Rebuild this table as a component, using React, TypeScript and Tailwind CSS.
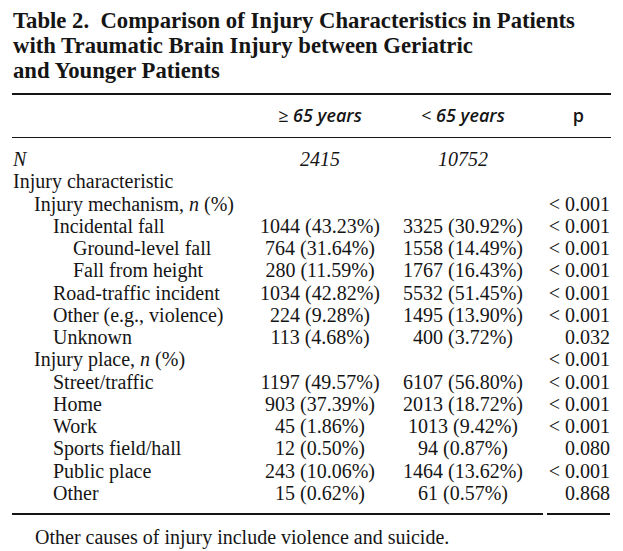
import React from "react"

type Row = {
  label: React.ReactNode
  level: number
  a?: string
  b?: string
  p?: string
  italicNums?: boolean
}

const rows: Row[] = [
  { label: <i>N</i>, level: 0, a: "2415", b: "10752", italicNums: true },
  { label: "Injury characteristic", level: 0 },
  { label: <>Injury mechanism, <i>n</i> (%)</>, level: 1, p: "< 0.001" },
  { label: "Incidental fall", level: 2, a: "1044 (43.23%)", b: "3325 (30.92%)", p: "< 0.001" },
  { label: "Ground-level fall", level: 3, a: "764 (31.64%)", b: "1558 (14.49%)", p: "< 0.001" },
  { label: "Fall from height", level: 3, a: "280 (11.59%)", b: "1767 (16.43%)", p: "< 0.001" },
  { label: "Road-traffic incident", level: 2, a: "1034 (42.82%)", b: "5532 (51.45%)", p: "< 0.001" },
  { label: "Other (e.g., violence)", level: 2, a: "224 (9.28%)", b: "1495 (13.90%)", p: "< 0.001" },
  { label: "Unknown", level: 2, a: "113 (4.68%)", b: "400 (3.72%)", p: "0.032" },
  { label: <>Injury place, <i>n</i> (%)</>, level: 1, p: "< 0.001" },
  { label: "Street/traffic", level: 2, a: "1197 (49.57%)", b: "6107 (56.80%)", p: "< 0.001" },
  { label: "Home", level: 2, a: "903 (37.39%)", b: "2013 (18.72%)", p: "< 0.001" },
  { label: "Work", level: 2, a: "45 (1.86%)", b: "1013 (9.42%)", p: "< 0.001" },
  { label: "Sports field/hall", level: 2, a: "12 (0.50%)", b: "94 (0.87%)", p: "0.080" },
  { label: "Public place", level: 2, a: "243 (10.06%)", b: "1464 (13.62%)", p: "< 0.001" },
  { label: "Other", level: 2, a: "15 (0.62%)", b: "61 (0.57%)", p: "0.868" },
]

const indent = ["pl-[1px]", "pl-[22px]", "pl-[41px]", "pl-[61px]"]

export default function App() {
  return (
    <div className="w-[623px] h-[551px] bg-white text-[#151515] px-[12px] pt-[8px] font-['Liberation_Serif',serif]">
      <h1 className="pl-[1px] text-[22.7px] leading-[25px] font-bold whitespace-nowrap">
        Table 2.&nbsp; Comparison of Injury Characteristics in Patients
        <br />
        with Traumatic Brain Injury between Geriatric
        <br />
        and Younger Patients
      </h1>

      <div className="mt-[10px] w-[599px] h-[1.5px] bg-[#151515]" />
      <div className="grid grid-cols-[244px_128px_143px_1fr] h-[42px] items-center text-[18px] font-semibold italic font-['Open_Sans',sans-serif]">
        <div />
        <div className="text-center">
          <span className="font-normal not-italic">≥</span> 65 years
        </div>
        <div className="pl-[15px] text-center">
          <span className="font-normal not-italic">&lt;</span> 65 years
        </div>
        <div className="text-right pr-[27px] not-italic">p</div>
      </div>
      <div className="w-[599px] h-[1.5px] bg-[#151515]" />

      <div className="pt-[10px] pb-[9px] text-[20px] leading-[22.27px]">
        {rows.map((r, i) => (
          <div key={i} className="grid grid-cols-[244px_128px_143px_1fr] w-[600px] whitespace-nowrap">
            <div className={indent[r.level]}>{r.label}</div>
            <div className={r.italicNums ? "text-center italic" : "text-center"}>{r.a}</div>
            <div className={r.italicNums ? "pl-[15px] text-center italic" : "pl-[15px] text-center"}>{r.b}</div>
            <div className="text-right pr-[2px]">{r.p}</div>
          </div>
        ))}
      </div>
      <div className="flex gap-[4px] w-[598px]">
        <div className="w-[531px] h-[1.5px] bg-[#151515]" />
        <div className="flex-1 h-[1.5px] bg-[#151515]" />
      </div>

      <p className="pt-[11px] pl-[23px] text-[20px] leading-[22px] whitespace-nowrap">
        Other causes of injury include violence and suicide.
      </p>
    </div>
  )
}
